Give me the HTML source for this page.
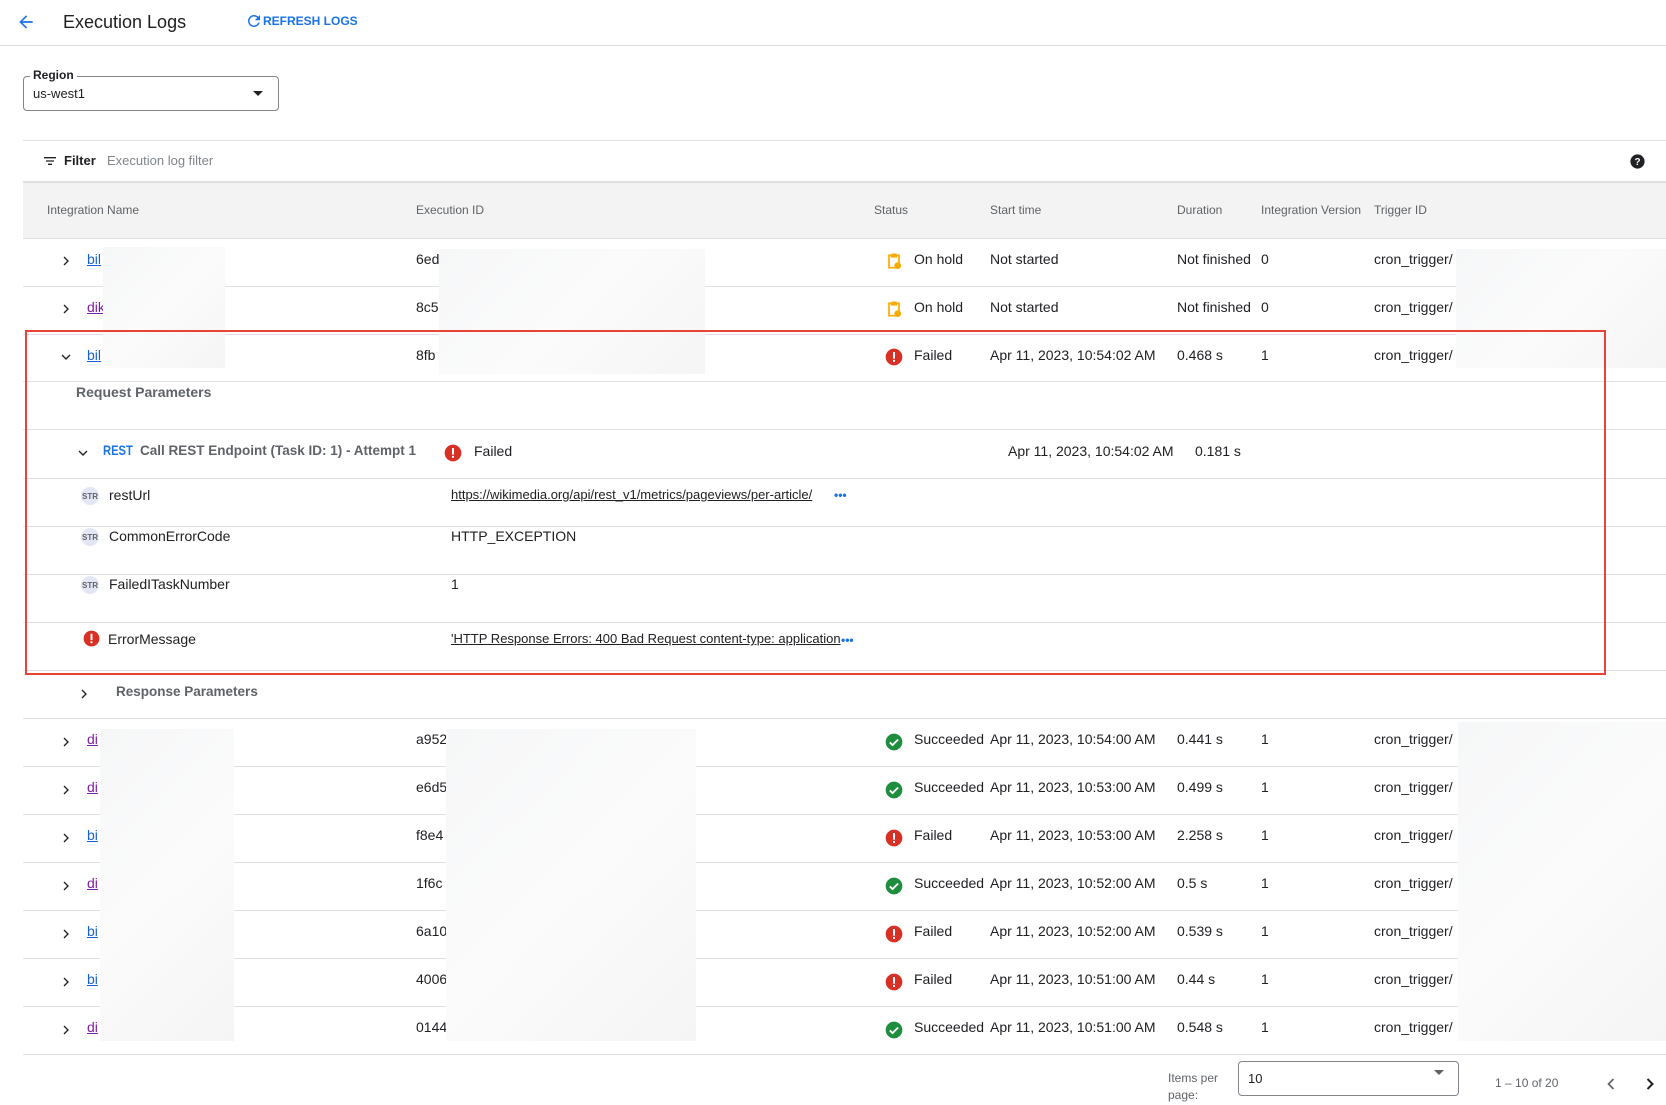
<!DOCTYPE html>
<html><head><meta charset="utf-8"><style>
*{margin:0;padding:0;box-sizing:border-box}
body{width:1666px;height:1105px;overflow:hidden;background:#fff;font-family:"Liberation Sans",sans-serif;color:#202124;position:relative;font-size:14px}
.a{position:absolute;white-space:nowrap}
.hl{position:absolute;left:23px;right:0;height:1px;background:#e0e0e0}
.t{position:absolute;line-height:18px;font-size:14px}
.lnk{text-decoration:underline;color:#1a5fd6}
.lnkp{text-decoration:underline;color:#7b1fa2}
.blur{position:absolute;background:linear-gradient(135deg,#f6f7f8,#fbfbfb 50%,#f5f5f6);}
.hdr{position:absolute;font-size:12px;color:#5f6368;top:203px}
.str{position:absolute;width:18px;height:18px;border-radius:50%;background:#e3e7f5;font-size:8px;color:#5f6368;text-align:center;line-height:19px;font-weight:bold}
.gray{color:#5f6368;font-weight:bold}
</style></head><body>
<svg class="a" style="left:16px;top:12px" width="20" height="20" viewBox="0 0 24 24"><path d="M20 11H7.8l5.6-5.6L12 4l-8 8 8 8 1.4-1.4L7.8 13H20z" fill="#1a73e8"/></svg>
<div class="a" style="left:63px;top:11px;font-size:18px;line-height:22px">Execution Logs</div>
<svg class="a" style="left:245px;top:12px" width="18" height="18" viewBox="0 0 24 24"><path d="M17.65 6.35A7.96 7.96 0 0 0 12 4a8 8 0 1 0 7.73 10h-2.08A6 6 0 1 1 12 6c1.66 0 3.14.69 4.22 1.78L13 11h7V4z" fill="#1a73e8"/></svg>
<div class="a" style="left:263px;top:14px;font-size:12px;color:#1a73e8;font-weight:bold">REFRESH LOGS</div>
<div class="a" style="left:0;right:0;top:45px;height:1px;background:#dadce0"></div>
<div class="a" style="left:23px;top:76px;width:256px;height:35px;border:1px solid #80868b;border-radius:4px"></div>
<div class="a" style="left:30px;top:68px;background:#fff;padding:0 3px;font-size:12px;font-weight:bold">Region</div>
<div class="a" style="left:33px;top:86px;font-size:13px">us-west1</div>
<div class="a" style="left:253px;top:91px;width:0;height:0;border-left:5px solid transparent;border-right:5px solid transparent;border-top:5px solid #202124"></div>
<div class="hl" style="top:140px"></div>
<svg class="a" style="left:42px;top:153px" width="16" height="16" viewBox="0 0 24 24"><path d="M3 6h18v2H3zM6 11h12v2H6zM9 16h6v2H9z" fill="#202124"/></svg>
<div class="a" style="left:64px;top:153px;font-size:13px;font-weight:bold">Filter</div>
<div class="a" style="left:107px;top:153px;font-size:13px;color:#80868b">Execution log filter</div>
<svg class="a" style="left:1629px;top:153px" width="17" height="17" viewBox="0 0 24 24"><circle cx="12" cy="12" r="10" fill="#202124"/><text x="12" y="17" font-size="14" font-weight="bold" fill="#fff" text-anchor="middle" font-family="Liberation Sans">?</text></svg>
<div class="a" style="left:23px;right:0;top:181px;height:57px;background:#f3f3f3;border-top:2px solid #e0e0e0"></div>
<div class="hl" style="top:238px"></div>
<div class="hdr" style="left:47px">Integration Name</div>
<div class="hdr" style="left:416px">Execution ID</div>
<div class="hdr" style="left:874px">Status</div>
<div class="hdr" style="left:990px">Start time</div>
<div class="hdr" style="left:1177px">Duration</div>
<div class="hdr" style="left:1261px">Integration Version</div>
<div class="hdr" style="left:1374px">Trigger ID</div>

<div class="hl" style="top:286px"></div>
<div class="hl" style="top:334px"></div>
<div class="hl" style="top:381px"></div>
<div class="hl" style="top:429px"></div>
<div class="hl" style="top:478px"></div>
<div class="hl" style="top:526px"></div>
<div class="hl" style="top:574px"></div>
<div class="hl" style="top:622px"></div>
<div class="hl" style="top:670px"></div>
<div class="hl" style="top:718px"></div>
<div class="hl" style="top:766px"></div>
<div class="hl" style="top:814px"></div>
<div class="hl" style="top:862px"></div>
<div class="hl" style="top:910px"></div>
<div class="hl" style="top:958px"></div>
<div class="hl" style="top:1006px"></div>
<div class="hl" style="top:1054px"></div>

<svg width="0" height="0" style="position:absolute"><defs>
<g id="chr"><path d="M9 6l6 6-6 6" fill="none" stroke="#202124" stroke-width="2"/></g>
<g id="chd"><path d="M6 9l6 6 6-6" fill="none" stroke="#202124" stroke-width="2"/></g>
<g id="fail"><circle cx="12" cy="12" r="10" fill="#d93025"/><rect x="10.8" y="6" width="2.4" height="8" fill="#fff"/><rect x="10.8" y="15.5" width="2.4" height="2.4" fill="#fff"/></g>
<g id="ok"><circle cx="12" cy="12" r="10" fill="#1e8e3e"/><path d="M7 12.5l3.2 3.2L17 9" fill="none" stroke="#fff" stroke-width="2.2"/></g>
<g id="hold"><path d="M6 5h3v2h6V5h3v15H6z" fill="none" stroke="#f9ab00" stroke-width="2"/><rect x="9" y="3" width="6" height="4" fill="#f9ab00"/><circle cx="16.5" cy="17.5" r="4" fill="#f9ab00"/></g>
</defs></svg>

<svg class="a" style="left:58px;top:253px" width="16" height="16" viewBox="0 0 24 24"><use href="#chr"/></svg>
<div class="t lnk" style="left:87px;top:250px">bil</div>
<div class="t" style="left:416px;top:250px">6ed</div>
<svg class="a" style="left:884px;top:251px" width="20" height="20" viewBox="0 0 24 24"><use href="#hold"/></svg>
<div class="t" style="left:914px;top:250px">On hold</div>
<div class="t" style="left:990px;top:250px">Not started</div>
<div class="t" style="left:1177px;top:250px">Not finished</div>
<div class="t" style="left:1261px;top:250px">0</div>
<div class="t" style="left:1374px;top:250px">cron_trigger/</div>
<svg class="a" style="left:58px;top:301px" width="16" height="16" viewBox="0 0 24 24"><use href="#chr"/></svg>
<div class="t lnkp" style="left:87px;top:298px">dik</div>
<div class="t" style="left:416px;top:298px">8c5</div>
<svg class="a" style="left:884px;top:299px" width="20" height="20" viewBox="0 0 24 24"><use href="#hold"/></svg>
<div class="t" style="left:914px;top:298px">On hold</div>
<div class="t" style="left:990px;top:298px">Not started</div>
<div class="t" style="left:1177px;top:298px">Not finished</div>
<div class="t" style="left:1261px;top:298px">0</div>
<div class="t" style="left:1374px;top:298px">cron_trigger/</div>
<svg class="a" style="left:58px;top:349px" width="16" height="16" viewBox="0 0 24 24"><use href="#chd"/></svg>
<div class="t lnk" style="left:87px;top:346px">bil</div>
<div class="t" style="left:416px;top:346px">8fb</div>
<svg class="a" style="left:884px;top:347px" width="20" height="20" viewBox="0 0 24 24"><use href="#fail"/></svg>
<div class="t" style="left:914px;top:346px">Failed</div>
<div class="t" style="left:990px;top:346px">Apr 11, 2023, 10:54:02 AM</div>
<div class="t" style="left:1177px;top:346px">0.468 s</div>
<div class="t" style="left:1261px;top:346px">1</div>
<div class="t" style="left:1374px;top:346px">cron_trigger/</div>

<div class="t gray" style="left:76px;top:383px">Request Parameters</div>
<svg class="a" style="left:75px;top:445px" width="16" height="16" viewBox="0 0 24 24"><use href="#chd"/></svg>
<div class="t" style="left:103px;top:441px;color:#1a73e8;font-weight:bold;font-size:14px;transform:scaleX(.8);transform-origin:left">REST</div>
<div class="t gray" style="left:140px;top:442px;font-size:13.5px">Call REST Endpoint (Task ID: 1) - Attempt 1</div>
<svg class="a" style="left:443px;top:443px" width="20" height="20" viewBox="0 0 24 24"><use href="#fail"/></svg>
<div class="t" style="left:474px;top:442px">Failed</div>
<div class="t" style="left:1008px;top:442px">Apr 11, 2023, 10:54:02 AM</div>
<div class="t" style="left:1195px;top:442px">0.181 s</div>

<div class="str" style="left:81px;top:487px">STR</div>
<div class="t" style="left:109px;top:486px">restUrl</div>
<div class="t" style="left:451px;top:486px;text-decoration:underline;font-size:13px">https://wikimedia.org/api/rest_v1/metrics/pageviews/per-article/</div>
<div class="t" style="left:834px;top:486px;color:#1a73e8;font-weight:bold;font-size:12px">•••</div>
<div class="str" style="left:81px;top:528px">STR</div>
<div class="t" style="left:109px;top:527px">CommonErrorCode</div>
<div class="t" style="left:451px;top:527px">HTTP_EXCEPTION</div>
<div class="str" style="left:81px;top:576px">STR</div>
<div class="t" style="left:109px;top:575px">FailedITaskNumber</div>
<div class="t" style="left:451px;top:575px">1</div>
<svg class="a" style="left:82px;top:629px" width="19" height="19" viewBox="0 0 24 24"><use href="#fail"/></svg>
<div class="t" style="left:108px;top:630px">ErrorMessage</div>
<div class="t" style="left:451px;top:630px;text-decoration:underline;font-size:13px">'HTTP Response Errors: 400 Bad Request content-type: application</div>
<div class="t" style="left:841px;top:631px;color:#1a73e8;font-weight:bold;font-size:12px">•••</div>
<svg class="a" style="left:76px;top:686px" width="16" height="16" viewBox="0 0 24 24"><use href="#chr"/></svg>
<div class="t gray" style="left:116px;top:683px;font-size:13.5px">Response Parameters</div>

<svg class="a" style="left:58px;top:734px" width="16" height="16" viewBox="0 0 24 24"><use href="#chr"/></svg>
<div class="t lnkp" style="left:87px;top:730px">di</div><div class="t" style="left:416px;top:730px">a952</div>
<svg class="a" style="left:884px;top:732px" width="20" height="20" viewBox="0 0 24 24"><use href="#ok"/></svg>
<div class="t" style="left:914px;top:730px">Succeeded</div><div class="t" style="left:990px;top:730px">Apr 11, 2023, 10:54:00 AM</div><div class="t" style="left:1177px;top:730px">0.441 s</div><div class="t" style="left:1261px;top:730px">1</div><div class="t" style="left:1374px;top:730px">cron_trigger/</div>
<svg class="a" style="left:58px;top:782px" width="16" height="16" viewBox="0 0 24 24"><use href="#chr"/></svg>
<div class="t lnkp" style="left:87px;top:778px">di</div><div class="t" style="left:416px;top:778px">e6d5</div>
<svg class="a" style="left:884px;top:780px" width="20" height="20" viewBox="0 0 24 24"><use href="#ok"/></svg>
<div class="t" style="left:914px;top:778px">Succeeded</div><div class="t" style="left:990px;top:778px">Apr 11, 2023, 10:53:00 AM</div><div class="t" style="left:1177px;top:778px">0.499 s</div><div class="t" style="left:1261px;top:778px">1</div><div class="t" style="left:1374px;top:778px">cron_trigger/</div>
<svg class="a" style="left:58px;top:830px" width="16" height="16" viewBox="0 0 24 24"><use href="#chr"/></svg>
<div class="t lnk" style="left:87px;top:826px">bi</div><div class="t" style="left:416px;top:826px">f8e4</div>
<svg class="a" style="left:884px;top:828px" width="20" height="20" viewBox="0 0 24 24"><use href="#fail"/></svg>
<div class="t" style="left:914px;top:826px">Failed</div><div class="t" style="left:990px;top:826px">Apr 11, 2023, 10:53:00 AM</div><div class="t" style="left:1177px;top:826px">2.258 s</div><div class="t" style="left:1261px;top:826px">1</div><div class="t" style="left:1374px;top:826px">cron_trigger/</div>
<svg class="a" style="left:58px;top:878px" width="16" height="16" viewBox="0 0 24 24"><use href="#chr"/></svg>
<div class="t lnkp" style="left:87px;top:874px">di</div><div class="t" style="left:416px;top:874px">1f6c</div>
<svg class="a" style="left:884px;top:876px" width="20" height="20" viewBox="0 0 24 24"><use href="#ok"/></svg>
<div class="t" style="left:914px;top:874px">Succeeded</div><div class="t" style="left:990px;top:874px">Apr 11, 2023, 10:52:00 AM</div><div class="t" style="left:1177px;top:874px">0.5 s</div><div class="t" style="left:1261px;top:874px">1</div><div class="t" style="left:1374px;top:874px">cron_trigger/</div>
<svg class="a" style="left:58px;top:926px" width="16" height="16" viewBox="0 0 24 24"><use href="#chr"/></svg>
<div class="t lnk" style="left:87px;top:922px">bi</div><div class="t" style="left:416px;top:922px">6a10</div>
<svg class="a" style="left:884px;top:924px" width="20" height="20" viewBox="0 0 24 24"><use href="#fail"/></svg>
<div class="t" style="left:914px;top:922px">Failed</div><div class="t" style="left:990px;top:922px">Apr 11, 2023, 10:52:00 AM</div><div class="t" style="left:1177px;top:922px">0.539 s</div><div class="t" style="left:1261px;top:922px">1</div><div class="t" style="left:1374px;top:922px">cron_trigger/</div>
<svg class="a" style="left:58px;top:974px" width="16" height="16" viewBox="0 0 24 24"><use href="#chr"/></svg>
<div class="t lnk" style="left:87px;top:970px">bi</div><div class="t" style="left:416px;top:970px">4006</div>
<svg class="a" style="left:884px;top:972px" width="20" height="20" viewBox="0 0 24 24"><use href="#fail"/></svg>
<div class="t" style="left:914px;top:970px">Failed</div><div class="t" style="left:990px;top:970px">Apr 11, 2023, 10:51:00 AM</div><div class="t" style="left:1177px;top:970px">0.44 s</div><div class="t" style="left:1261px;top:970px">1</div><div class="t" style="left:1374px;top:970px">cron_trigger/</div>
<svg class="a" style="left:58px;top:1022px" width="16" height="16" viewBox="0 0 24 24"><use href="#chr"/></svg>
<div class="t lnkp" style="left:87px;top:1018px">di</div><div class="t" style="left:416px;top:1018px">0144</div>
<svg class="a" style="left:884px;top:1020px" width="20" height="20" viewBox="0 0 24 24"><use href="#ok"/></svg>
<div class="t" style="left:914px;top:1018px">Succeeded</div><div class="t" style="left:990px;top:1018px">Apr 11, 2023, 10:51:00 AM</div><div class="t" style="left:1177px;top:1018px">0.548 s</div><div class="t" style="left:1261px;top:1018px">1</div><div class="t" style="left:1374px;top:1018px">cron_trigger/</div>

<div class="blur" style="left:103px;top:247px;width:122px;height:121px"></div>
<div class="blur" style="left:439px;top:249px;width:266px;height:125px"></div>
<div class="blur" style="left:1456px;top:249px;width:210px;height:119px"></div>
<div class="blur" style="left:100px;top:729px;width:134px;height:312px"></div>
<div class="blur" style="left:446px;top:729px;width:250px;height:312px"></div>
<div class="blur" style="left:1458px;top:722px;width:208px;height:319px"></div>

<div class="a" style="left:25px;top:330px;width:1581px;height:345px;border:2px solid #ea4335"></div>

<div class="a" style="left:1168px;top:1070px;font-size:12px;color:#5f6368;line-height:17px;white-space:normal;width:60px">Items per page:</div>
<div class="a" style="left:1238px;top:1061px;width:221px;height:35px;border:1px solid #80868b;border-radius:4px"></div>
<div class="a" style="left:1248px;top:1071px;font-size:13px">10</div>
<div class="a" style="left:1434px;top:1070px;width:0;height:0;border-left:5px solid transparent;border-right:5px solid transparent;border-top:5px solid #5f6368"></div>
<div class="a" style="left:1495px;top:1076px;font-size:12px;color:#5f6368">1 – 10 of 20</div>
<svg class="a" style="left:1601px;top:1074px" width="20" height="20" viewBox="0 0 24 24"><path d="M15 6l-6 6 6 6" fill="none" stroke="#5f6368" stroke-width="2"/></svg>
<svg class="a" style="left:1640px;top:1074px" width="20" height="20" viewBox="0 0 24 24"><path d="M9 6l6 6-6 6" fill="none" stroke="#202124" stroke-width="2.4"/></svg>
</body></html>
